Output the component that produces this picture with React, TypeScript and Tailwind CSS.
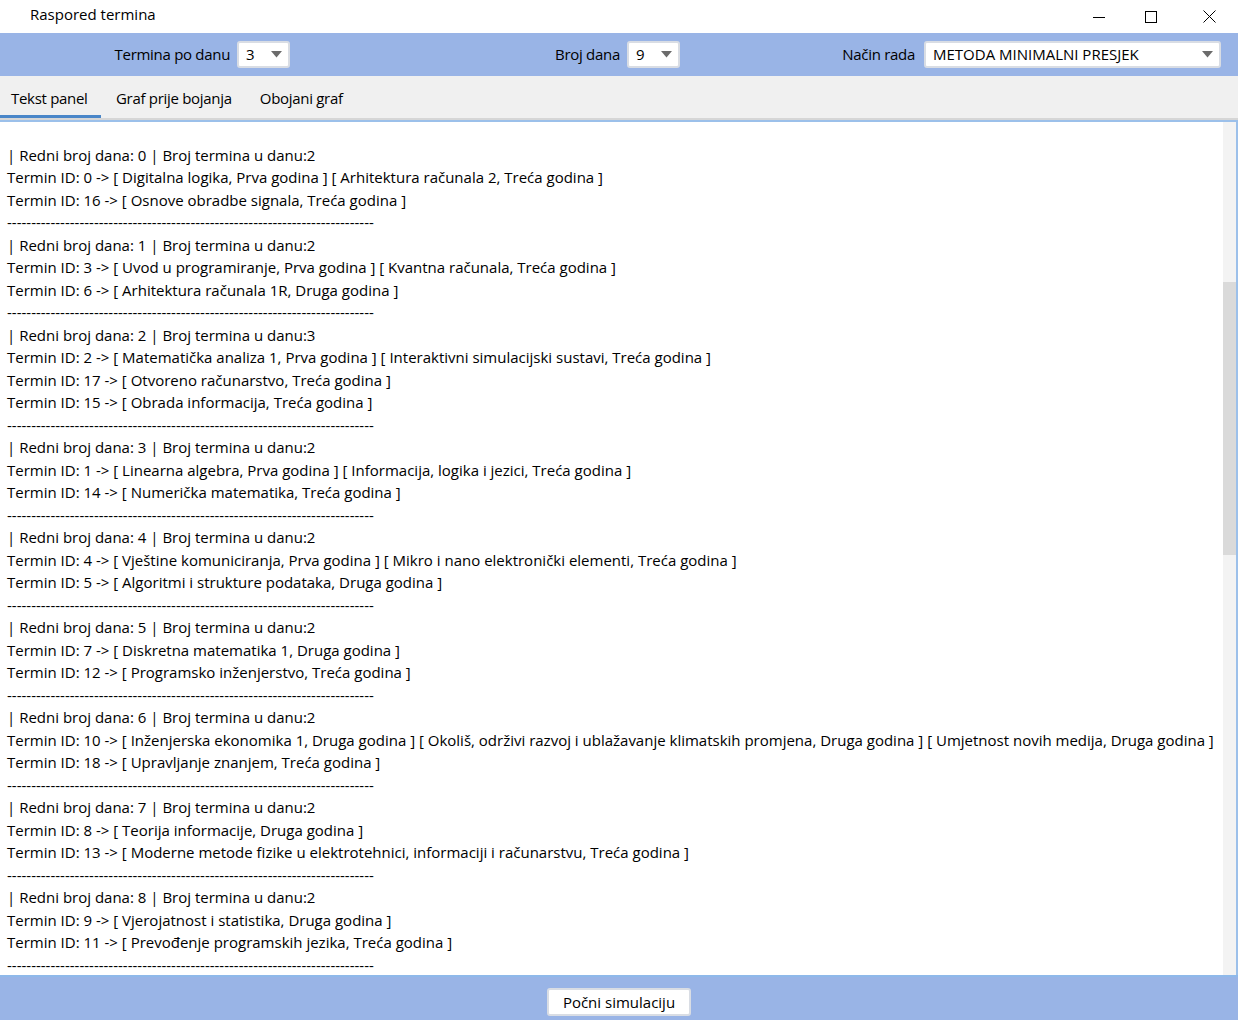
import { useMemo } from "react";

const DAYS: Array<{ day: number; termini: Array<[number, string[]]> }> = [
  { day: 0, termini: [[0, ["Digitalna logika, Prva godina", "Arhitektura računala 2, Treća godina"]], [16, ["Osnove obradbe signala, Treća godina"]]] },
  { day: 1, termini: [[3, ["Uvod u programiranje, Prva godina", "Kvantna računala, Treća godina"]], [6, ["Arhitektura računala 1R, Druga godina"]]] },
  {
    day: 2,
    termini: [
      [2, ["Matematička analiza 1, Prva godina", "Interaktivni simulacijski sustavi, Treća godina"]],
      [17, ["Otvoreno računarstvo, Treća godina"]],
      [15, ["Obrada informacija, Treća godina"]],
    ],
  },
  { day: 3, termini: [[1, ["Linearna algebra, Prva godina", "Informacija, logika i jezici, Treća godina"]], [14, ["Numerička matematika, Treća godina"]]] },
  { day: 4, termini: [[4, ["Vještine komuniciranja, Prva godina", "Mikro i nano elektronički elementi, Treća godina"]], [5, ["Algoritmi i strukture podataka, Druga godina"]]] },
  { day: 5, termini: [[7, ["Diskretna matematika 1, Druga godina"]], [12, ["Programsko inženjerstvo, Treća godina"]]] },
  {
    day: 6,
    termini: [
      [10, ["Inženjerska ekonomika 1, Druga godina", "Okoliš, održivi razvoj i ublažavanje klimatskih promjena, Druga godina", "Umjetnost novih medija, Druga godina"]],
      [18, ["Upravljanje znanjem, Treća godina"]],
    ],
  },
  { day: 7, termini: [[8, ["Teorija informacije, Druga godina"]], [13, ["Moderne metode fizike u elektrotehnici, informaciji i računarstvu, Treća godina"]]] },
  { day: 8, termini: [[9, ["Vjerojatnost i statistika, Druga godina"]], [11, ["Prevođenje programskih jezika, Treća godina"]]] },
];

const DASHES = "-".repeat(76);

function Arrow() {
  return (
    <svg width="11" height="7" viewBox="0 0 11 7" className="shrink-0">
      <path d="M0 0 H11 L5.5 6.5 Z" fill="#6b6b6b" />
    </svg>
  );
}

function Combo({ value, width }: { value: string; width: string }) {
  return (
    <div className={`flex items-center justify-between h-[27px] bg-white border-2 border-[#d9dde4] rounded-[3px] pl-[7px] pr-[6px] ${width}`}>
      <span>{value}</span>
      <Arrow />
    </div>
  );
}

export default function App() {
  const lines = useMemo(() => {
    const out: string[] = [""];
    DAYS.forEach((d) => {
      out.push(`| Redni broj dana: ${d.day} | Broj termina u danu:${d.termini.length}`);
      d.termini.forEach(([id, kolegiji]) => {
        out.push(`Termin ID: ${id} -> ` + kolegiji.map((k) => `[ ${k} ]`).join(" "));
      });
      out.push(DASHES);
    });
    return out;
  }, []);

  return (
    <div className="w-[1238px] h-[1020px] flex flex-col bg-white text-[15px] text-black overflow-hidden" style={{ fontFamily: '"Open Sans", "Noto Sans", sans-serif' }}>
      {/* Title bar */}
      <div className="h-[33px] flex items-center justify-between shrink-0">
        <span className="pl-[30px] -mt-[4px]">Raspored termina</span>
        <div className="flex h-full">
          <div className="w-[46px] flex items-center justify-center">
            <svg width="12" height="12" viewBox="0 0 12 12"><path d="M0 6.5 H12" stroke="#000" strokeWidth="1" /></svg>
          </div>
          <div className="w-[58px] flex items-center justify-center">
            <svg width="12" height="12" viewBox="0 0 12 12"><rect x="0.5" y="0.5" width="11" height="11" fill="none" stroke="#000" strokeWidth="1" /></svg>
          </div>
          <div className="w-[58px] flex items-center justify-center">
            <svg width="13" height="13" viewBox="0 0 13 13"><path d="M0.5 0.5 L12.5 12.5 M12.5 0.5 L0.5 12.5" stroke="#000" strokeWidth="1" /></svg>
          </div>
        </div>
      </div>

      {/* Settings bar */}
      <div className="h-[43px] bg-[#99b4e6] grid grid-cols-3 items-center shrink-0">
        <div className="flex items-center justify-center gap-[7px] pr-[8px]">
          <span className="tracking-[-0.3px]">Termina po danu</span>
          <Combo value="3" width="w-[53px]" />
        </div>
        <div className="flex items-center justify-center gap-[7px] pr-[3px]">
          <span className="tracking-[-0.3px]">Broj dana</span>
          <Combo value="9" width="w-[53px]" />
        </div>
        <div className="flex items-center justify-center gap-[9px]">
          <span className="tracking-[-0.3px]">Način rada</span>
          <Combo value="METODA MINIMALNI PRESJEK" width="w-[297px]" />
        </div>
      </div>

      {/* Tabs */}
      <div className="h-[42px] bg-[#f0f0f0] flex items-stretch shrink-0 whitespace-nowrap">
        <div className="relative pl-[11px] flex items-center w-[101px] pt-[2px] tracking-[-0.3px]">
          Tekst panel
          <div className="absolute left-0 right-0 bottom-0 h-[3px] bg-[#4a86c8]" />
        </div>
        <div className="pl-[15px] pr-[28px] flex items-center tracking-[-0.3px] pt-[2px]">Graf prije bojanja</div>
        <div className="flex items-center tracking-[-0.3px] pt-[2px]">Obojani graf</div>
      </div>
      <div className="h-[2px] bg-[#d6d6d6] shrink-0" />
      <div className="h-[2px] bg-[#9cc0ea] shrink-0" />

      {/* Text panel */}
      <div className="flex-1 flex min-h-0 border-r-2 border-[#9cc0ea]">
        <div className="flex-1 pl-[7px] -mt-[1px] leading-[22.5px] whitespace-pre overflow-hidden">
          {lines.map((l, i) => (
            <div key={i} className="h-[22.5px]">{l}</div>
          ))}
        </div>
        <div className="w-[13px] bg-[#f3f3f3] flex flex-col">
          <div className="h-[160px]" />
          <div className="h-[273px] bg-[#dadada]" />
        </div>
      </div>

      {/* Bottom bar */}
      <div className="h-[2px] bg-[#8fb9ea] shrink-0" />
      <div className="h-[43px] bg-[#99b4e6] flex items-start justify-center pt-[11px] shrink-0">
        <div className="w-[144px] h-[28px] bg-white border-2 border-[#d9dde4] rounded-[3px] flex items-center justify-center">
          Počni simulaciju
        </div>
      </div>
    </div>
  );
}
